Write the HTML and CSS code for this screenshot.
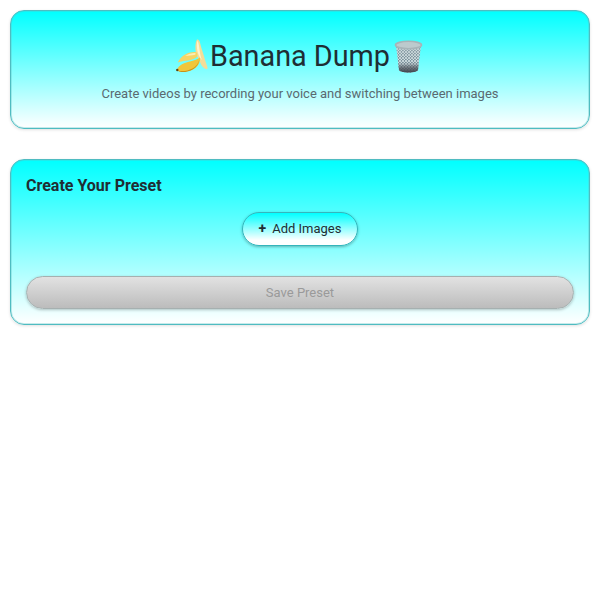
FILE: index.html
```html
<!DOCTYPE html>
<html lang="en">
<head>
  <meta charset="UTF-8" />
  <meta name="viewport" content="width=device-width, initial-scale=1.0" />
  <title>Banana Dump</title>
  <link rel="stylesheet" href="styles.css">
</head>
<body>
  <div class="container">
    <div class="card header">
      <h1>
        <svg class="emoji" viewBox="0 0 35 34" aria-hidden="true">
          <path d="M22 .5c1.500-.3 2.300 1 2.800 2.500 1 3.500 1.700 7 3 10.500 1.300 4 3 10 4.700 15 .3 1.200-.8 2-2 1.500-2.500-1.200-4.500-4-5.500-7-1.300-3.500-3-5-4-9C20.200 10 20 4 22 .5z" fill="#f3dd98"/>
          <path d="M22.500 1.500c1.500 3 1.700 7 2.200 10.500.4 3 1 6 2.300 9-2.500-2.500-4-6-4.700-9.500-.6-3.300-.7-7 .2-10z" fill="#fdf3cf"/>
          <path d="M21 13c-4-.3-9 .7-12.500 3.500C6 18.500 4 20.500 2.800 23.500c3-1.200 6.500-1.500 10-2 3.500-.6 7-1.500 9.200-3.500 1-1.700.5-3.700-1-5z" fill="#f5d564"/>
          <path d="M20 14c-3.500.2-7 1-9.800 3 3-.3 6.500-.5 9.800-1.300 1-.5 1-1.200 0-1.700z" fill="#fbeeb5"/>
          <path d="M25 18.500c.6 3.700-1.400 8-5 10.800-3.500 2.700-8.500 3.800-13 3.500-2.300-.1-4.200-.6-5-1.500.6-2.500 2.400-4.600 5-6 2.700-1.500 6-2.300 9-3.100 3.300-.9 6.400-1.700 9-3.700z" fill="#f1c63a"/>
          <path d="M2.500 31.500c5 1.200 10.500.5 15-2 3.300-1.800 5.700-4.800 6.800-8.500-.5 4-3 7.200-6.300 9.200-3.300 2-7.500 3-11.500 2.800-1.600-.1-3-.6-4-1.500z" fill="#c8901a"/>
          <circle cx="2.300" cy="31" r="1.200" fill="#5c4311"/>
        </svg><span>Banana Dump</span><svg class="emoji" viewBox="0 0 35 34" aria-hidden="true">
          <defs>
            <pattern id="mesh" width="3" height="3" patternUnits="userSpaceOnUse">
              <rect width="3" height="3" fill="#78909a"/>
              <circle cx="1" cy="1" r="1" fill="#e6f2f3"/>
              <circle cx="2.500" cy="2.500" r=".8" fill="#e6f2f3"/>
            </pattern>
            <linearGradient id="fade" x1="0" y1="0" x2="0" y2="1">
              <stop offset="0" stop-color="#b9c8cb" stop-opacity=".5"/>
              <stop offset=".6" stop-color="#8f9aa3" stop-opacity=".1"/>
              <stop offset=".8" stop-color="#50565e" stop-opacity=".7"/>
              <stop offset="1" stop-color="#3f444c"/>
            </linearGradient>
          </defs>
          <path d="M6 6l3 25c.2 1.300 4 2.500 9.500 2.500S27.800 32.300 28 31l3-25z" fill="url(#mesh)"/>
          <path d="M6 6l3 25c.2 1.300 4 2.500 9.500 2.500S27.800 32.300 28 31l3-25z" fill="url(#fade)"/>
          <ellipse cx="18.500" cy="6" rx="13" ry="3.700" fill="#bccacd" stroke="#a7b4b8" stroke-width="1.600"/>
        </svg>
      </h1>
      <p class="subtitle">Create videos by recording your voice and switching between images</p>
    </div>

    <div class="card preset">
      <h2>Create Your Preset</h2>
      <div class="add-row">
        <button class="add-btn" type="button"><span class="plus">+</span>Add Images</button>
      </div>
      <button class="save-btn" type="button" disabled>Save Preset</button>
    </div>
  </div>
</body>
</html>
```

FILE: styles.css
```css
* {
  box-sizing: border-box;
}

body {
  margin: 0;
  font-family: Roboto, "Liberation Sans", sans-serif;
  background-color: #ffffff;
  color: #1f2d33;
}

.container {
  display: flex;
  flex-direction: column;
  gap: 30px;
  padding: 10px;
}

.card {
  background: linear-gradient(180deg, #00ffff 0%, #ffffff 100%);
  border: 1px solid #4fbcc1;
  border-radius: 14px;
  box-shadow: inset 0 0 0 1px rgba(95, 195, 199, 0.35), 0 1px 3px rgba(0, 0, 0, 0.12);
}

.header {
  height: 119px;
  padding-top: 27px;
  text-align: center;
}

.header h1 {
  display: flex;
  justify-content: center;
  align-items: center;
  margin: 0;
  font-size: 28.8px;
  font-weight: 400;
  line-height: 36px;
}

.emoji {
  width: 35px;
  height: 34px;
}

.subtitle {
  margin: 11px 0 0;
  font-size: 13px;
  line-height: 18px;
  color: #5a6a70;
}

.preset {
  padding: 16px 15px 15px;
}

.preset h2 {
  margin: 0;
  font-size: 16px;
  font-weight: 700;
  line-height: 20px;
  color: #1f2d33;
}

.add-row {
  display: flex;
  justify-content: center;
  margin-top: 16px;
}

.add-btn {
  display: flex;
  align-items: center;
  justify-content: center;
  gap: 6px;
  width: 116px;
  height: 34px;
  padding: 0 0 2px;
  font-family: inherit;
  font-size: 13px;
  color: #1f2d33;
  background: linear-gradient(180deg, #00ffff 0%, #ffffff 85%);
  border: 1px solid #35b5bb;
  border-radius: 17px;
  box-shadow: 0 1px 3px rgba(0, 0, 0, 0.3);
}

.plus {
  font-weight: 700;
  font-size: 14px;
}

.save-btn {
  display: block;
  width: 100%;
  height: 33px;
  margin-top: 30px;
  font-family: inherit;
  font-size: 13px;
  color: #9a9a9a;
  background: linear-gradient(180deg, #e2e2e2 0%, #bcbcbc 100%);
  border: 1px solid #a6b0b0;
  border-radius: 17px;
  box-shadow: 0 1px 3px rgba(0, 0, 0, 0.25);
}
```
